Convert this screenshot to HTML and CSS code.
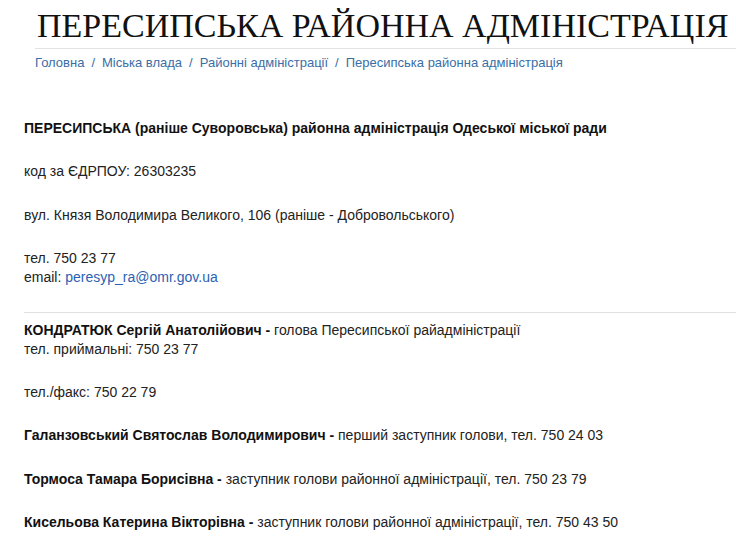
FILE: index.html
```html
<!DOCTYPE html>
<html lang="uk">
<head>
<meta charset="utf-8">
<title>Пересипська районна адміністрація</title>
<link rel="stylesheet" href="styles.css">
</head>
<body>
<div class="page">
  <header class="page-head">
    <h1 class="title">ПЕРЕСИПСЬКА РАЙОННА АДМІНІСТРАЦІЯ</h1>
    <nav class="crumbs">
      <a href="#">Головна</a><span class="sep">/</span><a href="#">Міська влада</a><span class="sep">/</span><a href="#">Районні адміністрації</a><span class="sep">/</span><a href="#">Пересипська районна адміністрація</a>
    </nav>
  </header>
  <main class="content">
    <p class="para"><b>ПЕРЕСИПСЬКА (раніше Суворовська) районна адміністрація Одеської міської ради</b></p>
    <p class="para">код за ЄДРПОУ: 26303235</p>
    <p class="para">вул. Князя Володимира Великого, 106 (раніше - Добровольського)</p>
    <p class="para">тел. 750 23 77<br>email: <a class="mail" href="#">peresyp_ra@omr.gov.ua</a></p>
    <hr class="rule">
    <p class="para"><b>КОНДРАТЮК Сергій Анатолійович -</b> голова Пересипської райадміністрації<br>тел. приймальні: 750 23 77</p>
    <p class="para">тел./факс: 750 22 79</p>
    <p class="para"><b>Галанзовський Святослав Володимирович -</b> перший заступник голови, тел. 750 24 03</p>
    <p class="para"><b>Тормоса Тамара Борисівна -</b> заступник голови районної адміністрації, тел. 750 23 79</p>
    <p class="para"><b>Кисельова Катерина Вікторівна -</b> заступник голови районної адміністрації, тел. 750 43 50</p>
  </main>
</div>
</body>
</html>
```
FILE: styles.css
```css
html, body {
  margin: 0;
  padding: 0;
  background: #fff;
}
body {
  font-family: "Liberation Sans", Arial, sans-serif;
  font-size: 14px;
  color: #222;
}
.page {
  width: 736px;
  overflow: hidden;
}
.page-head {
  padding-left: 35px;
}
.title {
  margin: 0;
  padding: 8px 0 4px 2px;
  font-family: "Liberation Serif", "Times New Roman", serif;
  font-weight: normal;
  font-size: 34px;
  line-height: 36px;
  color: #111;
  white-space: nowrap;
  border-bottom: 1px solid #e3e3e3;
}
.crumbs {
  padding: 5px 0 7px;
  font-size: 13px;
  line-height: 18px;
  color: #3a6ea5;
}
.crumbs a {
  color: #3a6ea5;
  text-decoration: none;
}
.sep {
  padding: 0 7px;
  color: #3a6ea5;
}
.content {
  padding: 40px 0 0 24px;
}
.para {
  margin: 0 0 24.4px;
  line-height: 19px;
}
.para b {
  font-weight: bold;
  color: #111;
}
.mail {
  color: #2a62b3;
  text-decoration: none;
}
.rule {
  margin: 13px 0 8px;
  border: 0;
  border-top: 1px solid #e0e0e0;
}
```
